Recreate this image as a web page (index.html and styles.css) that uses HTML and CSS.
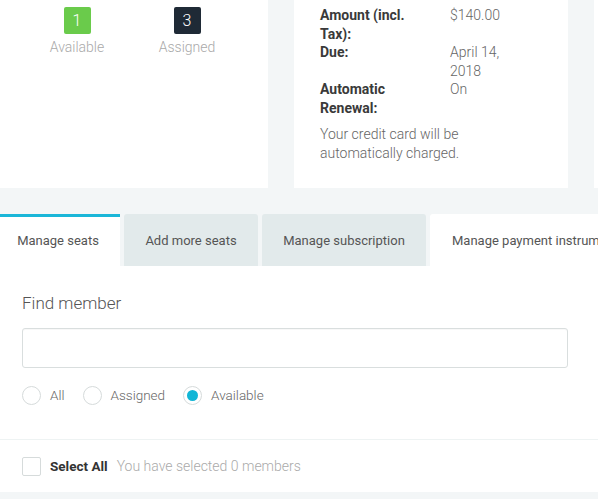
FILE: index.html
```html
<!DOCTYPE html>
<html>
<head>
<meta charset="utf-8">
<link rel="stylesheet" href="styles.css">
</head>
<body>
<div class="page">
  <div class="cards">
    <div class="card card-seats">
      <div class="stats">
        <div class="stat">
          <div class="badge badge-green">1</div>
          <div class="stat-label">Available</div>
        </div>
        <div class="stat">
          <div class="badge badge-dark">3</div>
          <div class="stat-label">Assigned</div>
        </div>
      </div>
    </div>
    <div class="card card-billing">
      <div class="details">
        <div class="dt">Amount (incl. Tax):</div>
        <div class="dd">$140.00</div>
        <div class="dt">Due:</div>
        <div class="dd">April 14, 2018</div>
        <div class="dt">Automatic Renewal:</div>
        <div class="dd">On</div>
      </div>
      <p class="note">Your credit card will be automatically charged.</p>
    </div>
    <div class="card card-extra"></div>
  </div>

  <div class="tabs">
    <div class="tab tab-active">Manage seats</div>
    <div class="tab tab-add">Add more seats</div>
    <div class="tab tab-sub">Manage subscription</div>
    <div class="tab tab-open">Manage payment instruments</div>
  </div>

  <div class="panel">
    <div class="search">
      <div class="search-title">Find member</div>
      <div class="search-input"></div>
      <div class="radios">
        <div class="radio"><span class="radio-circle"></span><span class="radio-text">All</span></div>
        <div class="radio"><span class="radio-circle"></span><span class="radio-text">Assigned</span></div>
        <div class="radio"><span class="radio-circle radio-on"></span><span class="radio-text">Available</span></div>
      </div>
    </div>
    <div class="select-row">
      <span class="checkbox"></span>
      <span class="select-all">Select All</span>
      <span class="select-info">You have selected 0 members</span>
    </div>
  </div>
</div>
</body>
</html>
```

FILE: styles.css
```css
html, body {
  margin: 0;
  padding: 0;
}
body {
  background: #f3f6f7;
  font-family: Roboto, "Liberation Sans", Arial, sans-serif;
  width: 598px;
  height: 499px;
  overflow: hidden;
}
.page {
  width: 598px;
  overflow: hidden;
}
.cards {
  display: flex;
  gap: 26px;
  height: 188px;
  width: 700px;
}
.card {
  background: #fff;
  height: 188px;
  box-sizing: border-box;
  flex: none;
}
.card-seats {
  width: 268px;
  padding: 7px 0 0 22px;
}
.stats {
  display: flex;
}
.stat {
  width: 110px;
  display: flex;
  flex-direction: column;
  align-items: center;
}
.badge {
  width: 27px;
  height: 27px;
  border-radius: 2px;
  color: #fff;
  font-size: 16px;
  line-height: 27px;
  text-align: center;
  font-weight: 300;
}
.badge-green {
  background: #6acb4b;
}
.badge-dark {
  background: #1f2a36;
}
.stat-label {
  margin-top: 4px;
  font-size: 14px;
  line-height: 18px;
  color: #a9a9a9;
  font-weight: 300;
}
.card-billing {
  width: 274px;
  padding: 6px 26px 0 26px;
}
.details {
  display: grid;
  grid-template-columns: 110px 80px;
  column-gap: 20px;
  font-size: 14px;
  line-height: 18.5px;
}
.dt {
  font-weight: 700;
  color: #3a3a3a;
}
.dd {
  color: #666;
  font-weight: 300;
}
.note {
  margin: 8px 0 0 0;
  max-width: 200px;
  font-size: 14px;
  line-height: 19px;
  color: #666;
  font-weight: 300;
}
.card-extra {
  width: 100px;
}
.tabs {
  display: flex;
  gap: 4px;
  margin-top: 26px;
  height: 52px;
  width: 700px;
}
.tab {
  flex: none;
  height: 52px;
  box-sizing: border-box;
  display: flex;
  align-items: center;
  justify-content: center;
  white-space: nowrap;
  font-size: 13px;
  color: #555;
  background: #e2eaeb;
  border-radius: 3px 3px 0 0;
}
.tab-active {
  background: #fff;
  border-top: 3px solid #1bb6d8;
  border-radius: 0;
  padding-bottom: 3px;
  padding-right: 4px;
  width: 120px;
}
.tab-add {
  width: 134px;
}
.tab-sub {
  width: 164px;
}
.tab-open {
  background: #fff;
  justify-content: flex-start;
  padding-left: 22px;
  width: 200px;
}
.panel {
  background: #fff;
  width: 598px;
  height: 226px;
  box-sizing: border-box;
}
.search {
  padding: 26px 30px 0 22px;
  height: 174px;
  box-sizing: border-box;
  border-bottom: 1px solid #eef3f3;
}
.search-title {
  font-size: 17px;
  line-height: 22px;
  color: #555;
  font-weight: 300;
}
.search-input {
  margin-top: 14px;
  height: 40px;
  box-sizing: border-box;
  border: 1px solid #d9dede;
  border-radius: 3px;
  box-shadow: inset 0 1px 1px rgba(0,0,0,0.03);
}
.radios {
  display: flex;
  margin-top: 17px;
  align-items: center;
  height: 20px;
}
.radio {
  display: flex;
  align-items: center;
  margin-right: 18px;
}
.radio-circle {
  width: 19px;
  height: 19px;
  box-sizing: border-box;
  border: 1px solid #d6dbdb;
  border-radius: 50%;
  position: relative;
}
.radio-on::after {
  content: "";
  position: absolute;
  left: 3px;
  top: 3px;
  width: 11px;
  height: 11px;
  border-radius: 50%;
  background: #12b6d6;
}
.radio-text {
  margin-left: 9px;
  font-size: 13.5px;
  color: #666;
  font-weight: 300;
}
.select-row {
  display: flex;
  align-items: center;
  padding: 16px 22px 0 22px;
  height: 20px;
}
.checkbox {
  width: 19px;
  height: 19px;
  box-sizing: border-box;
  border: 1px solid #d6dbdb;
  border-radius: 2px;
}
.select-all {
  margin-left: 9px;
  font-size: 13.5px;
  font-weight: 700;
  color: #333;
}
.select-info {
  margin-left: 9px;
  font-size: 14px;
  color: #aaa;
  font-weight: 300;
}
```
